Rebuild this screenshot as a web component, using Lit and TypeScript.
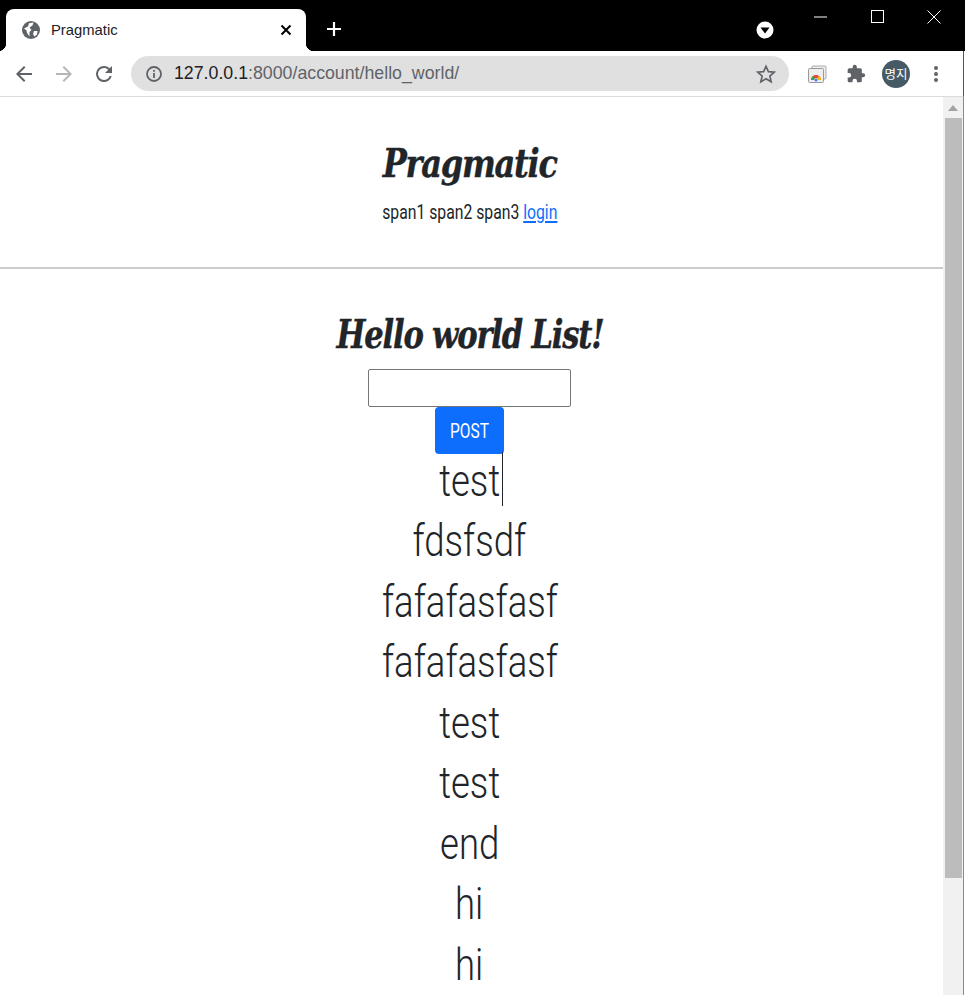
import { LitElement, html, css } from "lit";
import { customElement } from "lit/decorators.js";

@customElement("app-root")
export class AppRoot extends LitElement {
  static styles = css`
    :host { display: block; width: 965px; height: 995px; overflow: hidden; background: #fff; font-family: "Roboto", "Liberation Sans", sans-serif; }
    .tabstrip { height: 51px; background: #000; display: flex; position: relative; }
    .tab { margin: 9px 0 0 6px; width: 300px; height: 42px; background: #fff; border-radius: 8px 8px 0 0; display: flex; align-items: center; position: relative; box-sizing: border-box; padding: 0 14px 0 16px; }
    .tab::before, .tab::after { content: ""; position: absolute; bottom: 0; width: 8px; height: 8px; }
    .tab::before { left: -8px; background: radial-gradient(circle at 0 0, #000 8px, #fff 8.5px); }
    .tab::after { right: -8px; background: radial-gradient(circle at 100% 0, #000 8px, #fff 8.5px); }
    .tab-title { flex: 1; margin-left: 11px; font: 14.8px "Liberation Sans", Arial, sans-serif; color: #202124; }
    .tab svg { display: block; }
    .newtab { margin: 19px 0 0 18px; width: 20px; height: 20px; }
    .spacer { flex: 1; }
    .media { margin: 21px 0 0 0; }
    .winbtns { display: flex; margin: 0 3px 0 18.5px; }
    .winbtn { width: 56.5px; height: 33px; display: flex; align-items: center; justify-content: center; }
    .toolbar { display: flex; align-items: center; box-sizing: border-box; background: #fff; border-bottom: 1px solid #dadce0; border-right: 1px solid #555; width: 964px; height: 46px; padding-left: 12px; }
    .navbtn { width: 24px; height: 24px; margin-right: 16px; flex: none; }
    .omnibox { width: 658px; margin-left: -1px; height: 35px; background: #e0e0e0; border-radius: 18px; display: flex; align-items: center; box-sizing: border-box; padding: 0 12px 0 14px; }
    .url { flex: 1; margin-left: 11px; font: 17.75px "Liberation Sans", Arial, sans-serif; color: #5f6368; white-space: nowrap; }
    .url b { font-weight: 400; color: #202124; }
    .tools { display: flex; align-items: center; margin-left: 18px; }
    .avatar { width: 28px; height: 28px; border-radius: 50%; background: #455a64; color: #fff; font: 12.5px "Noto Sans CJK KR", sans-serif; display: flex; align-items: center; justify-content: center; }
    .viewport { display: flex; height: 898px; overflow: hidden; }
    .page { width: 943px; flex: none; color: #212529; }
    .center { padding-right: 4px; display: flex; flex-direction: column; align-items: center; text-align: center; }
    .head { height: 170px; border-bottom: 2px solid #ccc; box-sizing: content-box; }
    h1, h2 { margin: 0; font-family: "DejaVu Serif Condensed", "DejaVu Serif", "Liberation Serif", serif; font-style: italic; font-weight: 700; color: #212529; white-space: nowrap; font-size: 40px; line-height: 53px; letter-spacing: -1.4px; -webkit-text-stroke: 0.4px #212529; }
    h1 { padding-top: 39px; transform-origin: center bottom; transform: scaleX(.89); }
    h2 { padding-top: 38px; transform: scaleX(.85); }
    .nav { font-size: 21px; font-weight: 400; line-height: 30px; margin-top: 8px; transform: scaleX(.75); white-space: nowrap; }
    .nav a { color: #0d6efd; }
    input { display: block; box-sizing: border-box; width: 203px; height: 38px; margin-top: 9px; border: 1px solid #767676; border-radius: 2px; background: #fff; padding: 0; }
    button { display: block; width: 69px; height: 47px; border: 0; border-radius: 4px; background: #0d6efd; color: #fff; font: 400 21px "Roboto", sans-serif; padding: 0; }
    button span { display: block; transform: scaleX(.74); }
    .item { height: 60.45px; line-height: 60.45px; font-size: 44px; font-weight: 300; white-space: nowrap; position: relative; }
    .item span { display: inline-block; transform: scaleX(.83); }
    .items { margin-top: -3px; display: flex; flex-direction: column; align-items: center; }
    .ibeam { position: absolute; left: calc(50% + 32px); top: 1px; width: 1px; height: 54px; background: #212529; }
    .scrollbar { width: 20px; flex: none; background: #f1f1f1; display: flex; flex-direction: column; align-items: center; }
    .arrow { height: 21px; display: flex; align-items: center; justify-content: center; }
    .thumb { width: 17px; height: 760px; background: #bcbcbc; }
    .edge { flex: 1; display: flex; }
    .edge i { width: 1px; background: #8a8a8a; }
    .edge u { flex: 1; background: #fff; }
  `;

  render() {
    const items = ["fdsfsdf", "fafafasfasf", "fafafasfasf", "test", "test", "end", "hi", "hi"];
    return html`
      <div class="tabstrip">
        <div class="tab">
          <svg width="18" height="18" viewBox="0 0 18 18"><circle cx="9" cy="9" r="9" fill="#5f6368"/><path d="M2 7.5 L6 5.5 L7 2.2 L11.5 1.5 L10.5 4.5 L7.5 6.5 L9.5 9 L7.5 11 L7.5 15.5 L5 12 L4.5 9.5Z M12 10 L15.5 10 L15 13.5 L12.5 15.5 L11 13Z" fill="#fff"/></svg>
          <span class="tab-title">Pragmatic</span>
          <svg width="12" height="12" viewBox="0 0 12 12"><path d="M1.5 1.5 L10.5 10.5 M10.5 1.5 L1.5 10.5" stroke="#000" stroke-width="2"/></svg>
        </div>
        <svg class="newtab" viewBox="0 0 20 20"><path d="M10 3 V17 M3 10 H17" stroke="#fff" stroke-width="2.2"/></svg>
        <div class="spacer"></div>
        <svg class="media" width="18" height="18" viewBox="0 0 18 18"><circle cx="9" cy="9" r="8.5" fill="#fff"/><path d="M4.5 6.5 H13.5 L9 12.5Z" fill="#000"/></svg>
        <div class="winbtns">
          <div class="winbtn"><svg width="13" height="2" viewBox="0 0 13 2"><path d="M0 1H13" stroke="#fff"/></svg></div>
          <div class="winbtn"><svg width="13" height="13" viewBox="0 0 13 13"><rect x=".5" y=".5" width="12" height="12" fill="none" stroke="#fff"/></svg></div>
          <div class="winbtn"><svg width="14" height="14" viewBox="0 0 14 14"><path d="M.5 .5 L13.5 13.5 M13.5 .5 L.5 13.5" stroke="#fff"/></svg></div>
        </div>
      </div>
      <div class="toolbar">
        <svg class="navbtn" viewBox="0 0 24 24"><path d="M20 11H7.8l5.6-5.6L12 4l-8 8 8 8 1.4-1.4L7.8 13H20z" fill="#5f6368"/></svg>
        <svg class="navbtn" viewBox="0 0 24 24"><path d="M4 11h12.2l-5.6-5.6L12 4l8 8-8 8-1.4-1.4 5.6-5.6H4z" fill="#b4b6b8"/></svg>
        <svg class="navbtn" viewBox="0 0 24 24"><path d="M17.65 6.35A7.96 7.96 0 0 0 12 4a8 8 0 1 0 7.73 10h-2.08A6 6 0 1 1 12 6c1.66 0 3.14.69 4.22 1.78L13 11h7V4z" fill="#5f6368"/></svg>
        <div class="omnibox">
          <svg width="18" height="18" viewBox="0 0 18 18"><circle cx="9" cy="9" r="7" fill="none" stroke="#5f6368" stroke-width="1.8"/><path d="M9 8v5M9 5v1.8" stroke="#5f6368" stroke-width="1.8"/></svg>
          <span class="url"><b>127.0.0.1</b>:8000/account/hello_world/</span>
          <svg width="22" height="22" viewBox="0 0 24 24"><path d="M12 3.5l2.6 5.9 6.4.6-4.8 4.2 1.4 6.3L12 17.2l-5.6 3.3 1.4-6.3L3 10l6.4-.6z" fill="none" stroke="#5f6368" stroke-width="1.8" stroke-linejoin="miter"/></svg>
        </div>
        <div class="tools">
          <svg width="20" height="20" viewBox="0 0 20 20" style="margin-right:19px"><rect x="5" y="2" width="14" height="13" rx="1" fill="#eee" stroke="#aaa"/><rect x="1.5" y="4.5" width="15" height="14" rx="1" fill="#eee" stroke="#999"/><path d="M4 16a5 5 0 0 1 10 0h-3a2 2 0 0 0-4 0z" fill="#ea4335"/><path d="M4 16a5 5 0 0 1 2-4l2 2.2a2 2 0 0 0-1 1.8z" fill="#34a853"/><path d="M14 16h-3a2 2 0 0 0-1-1.7l2-2.2a5 5 0 0 1 2 3.9z" fill="#fbbc04"/><circle cx="9" cy="16" r="1.6" fill="#4285f4"/></svg>
          <svg width="20" height="20" viewBox="0 0 24 24" style="margin-right:16px"><path d="M20.5 11H19V7a2 2 0 0 0-2-2h-4V3.5a2.5 2.5 0 0 0-5 0V5H4a2 2 0 0 0-2 2v3.8h1.5a2.7 2.7 0 0 1 0 5.4H2V20a2 2 0 0 0 2 2h3.8v-1.5a2.7 2.7 0 0 1 5.4 0V22H17a2 2 0 0 0 2-2v-4h1.5a2.5 2.5 0 0 0 0-5z" fill="#5f6368"/></svg>
          <div class="avatar">명지</div>
          <svg width="4" height="16" viewBox="0 0 4 16" style="margin-left:24px"><circle cx="2" cy="2" r="2" fill="#5f6368"/><circle cx="2" cy="8" r="2" fill="#5f6368"/><circle cx="2" cy="14" r="2" fill="#5f6368"/></svg>
        </div>
      </div>
      <div class="viewport">
        <div class="page">
          <div class="head">
            <div class="center">
              <h1>Pragmatic</h1>
              <div class="nav"><span>span1</span> <span>span2</span> <span>span3</span> <a href="#">login</a></div>
            </div>
          </div>
          <div class="center">
            <h2>Hello world List!</h2>
            <input type="text" />
            <button><span>POST</span></button>
            <div class="items">
              <div class="item"><span>test</span><i class="ibeam"></i></div>
              ${items.map((t) => html`<div class="item"><span>${t}</span></div>`)}
            </div>
          </div>
        </div>
        <div class="scrollbar">
          <div class="arrow"><svg width="10" height="6" viewBox="0 0 10 6"><path d="M5 0L10 6H0Z" fill="#a3a3a3"/></svg></div>
          <div class="thumb"></div>
        </div>
        <div class="edge"><i></i><u></u></div>
      </div>
    `;
  }
}
